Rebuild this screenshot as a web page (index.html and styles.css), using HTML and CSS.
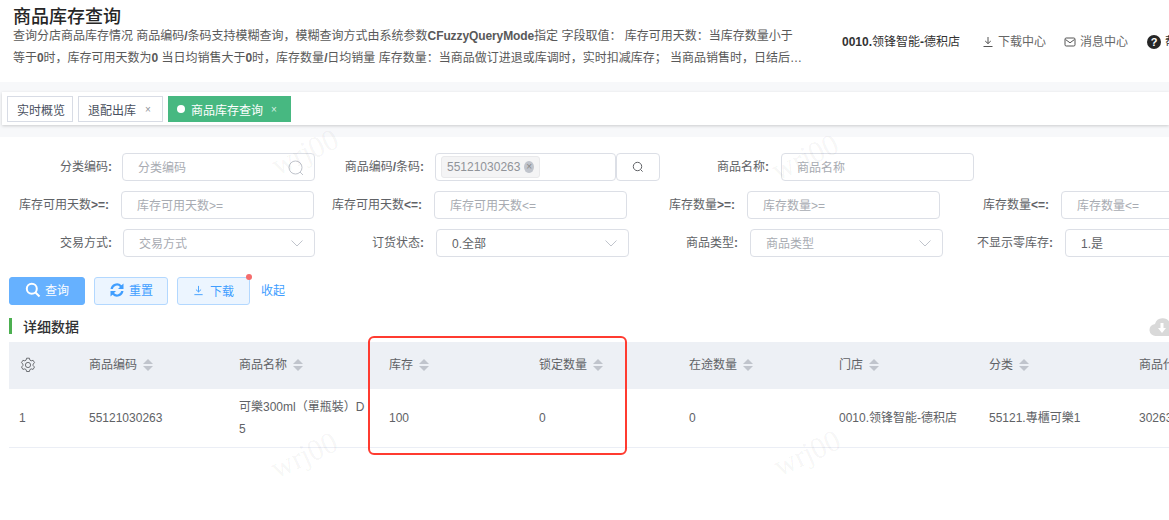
FILE: index.html
```html
<!DOCTYPE html>
<html lang="zh-CN">
<head>
<meta charset="utf-8">
<title>商品库存查询</title>
<link rel="stylesheet" href="styles.css">
</head>
<body>
<div class="page">
  <header class="top">
    <div class="intro">
      <h1 class="title">商品库存查询</h1>
      <p class="desc">查询分店商品库存情况 商品编码<b>/</b>条码支持模糊查询，模糊查询方式由系统参数<b>CFuzzyQueryMode</b>指定 字段取值： 库存可用天数：当库存数量小于等于<b>0</b>时，库存可用天数为<b>0</b> 当日均销售大于<b>0</b>时，库存数量<b>/</b>日均销量 库存数量：当商品做订进退或库调时，实时扣减库存； 当商品销售时，日结后扣减库存，库存数量以日结后的数据为准，请注意查询时间</p>
    </div>
    <div class="store"><b>0010.</b>领锋智能<b>-</b>德积店</div>
    <div class="link link-down">
      <svg class="link-icon" viewBox="0 0 12 12"><path d="M6 1v6.500M3.200 5 6 7.600 8.800 5M1.500 10.500h9" fill="none" stroke="#555" stroke-width="1"/></svg>
      <span>下载中心</span>
    </div>
    <div class="link link-msg">
      <svg class="link-icon" viewBox="0 0 12 12"><rect x="1" y="2" width="10" height="8" rx="1.200" fill="none" stroke="#555"/><path d="M1.500 3.500 6 6.800l4.500-3.300" fill="none" stroke="#555"/></svg>
      <span>消息中心</span>
    </div>
    <div class="link link-help">
      <span class="help-dot">?</span>
      <span>帮助</span>
    </div>
  </header>

  <nav class="tabs">
    <span class="tab tab-first">实时概览</span>
    <span class="tab tab-second">退配出库<i class="tab-x">×</i></span>
    <span class="tab tab-active"><i class="tab-dot"></i>商品库存查询<i class="tab-x">×</i></span>
  </nav>

  <main class="content">
  <section class="form">
    <div class="row row-1">
      <label class="lab">分类编码<b>:</b></label>
      <div class="ctl ph">分类编码
        <svg class="ctl-search" viewBox="0 0 16 16"><circle cx="7.500" cy="7.500" r="6.500" fill="none" stroke="#c0c4cc"/><path d="m12 12 3 3" stroke="#c0c4cc"/></svg>
      </div>
      <label class="lab">商品编码<b>/</b>条码<b>:</b></label>
      <div class="ctl ctl-tag"><span class="tag">55121030263<i class="tag-x">×</i></span></div>
      <button class="search-btn" type="button"><svg viewBox="0 0 12 12"><circle cx="5.500" cy="5.500" r="4.200" fill="none" stroke="#606266"/><path d="m8.600 8.600 2 2" stroke="#606266"/></svg></button>
      <label class="lab">商品名称<b>:</b></label>
      <div class="ctl ph">商品名称</div>
    </div>
    <div class="row row-2">
      <label class="lab">库存可用天数<b>&gt;=:</b></label>
      <div class="ctl ph">库存可用天数&gt;=</div>
      <label class="lab">库存可用天数<b>&lt;=:</b></label>
      <div class="ctl ph">库存可用天数&lt;=</div>
      <label class="lab">库存数量<b>&gt;=:</b></label>
      <div class="ctl ph">库存数量&gt;=</div>
      <label class="lab">库存数量<b>&lt;=:</b></label>
      <div class="ctl ph">库存数量&lt;=</div>
    </div>
    <div class="row row-3">
      <label class="lab">交易方式<b>:</b></label>
      <div class="ctl ph">交易方式<svg class="chev" viewBox="0 0 12 7"><path d="m.5.5 5.500 5.500L11.500.5" fill="none" stroke="#c0c4cc"/></svg></div>
      <label class="lab">订货状态<b>:</b></label>
      <div class="ctl val">0.全部<svg class="chev" viewBox="0 0 12 7"><path d="m.5.5 5.500 5.500L11.500.5" fill="none" stroke="#c0c4cc"/></svg></div>
      <label class="lab">商品类型<b>:</b></label>
      <div class="ctl ph">商品类型<svg class="chev" viewBox="0 0 12 7"><path d="m.5.5 5.500 5.500L11.500.5" fill="none" stroke="#c0c4cc"/></svg></div>
      <label class="lab">不显示零库存<b>:</b></label>
      <div class="ctl val">1.是</div>
    </div>
  </section>

  <div class="actions">
    <button class="btn btn-query" type="button"><svg viewBox="0 0 16 16"><circle cx="6.800" cy="6.800" r="5" fill="none" stroke="#fff" stroke-width="2"/><path d="m10.500 10.500 4 4" stroke="#fff" stroke-width="2"/></svg>查询</button>
    <button class="btn btn-reset" type="button"><svg viewBox="0 0 16 16"><path d="M1.500 7a6.500 6.500 0 0 1 11-3.800L14.500 1.500V7H9l2-2A4.200 4.200 0 0 0 3.800 7zM14.500 9a6.500 6.500 0 0 1-11 3.800L1.500 14.500V9H7l-2 2A4.200 4.200 0 0 0 12.200 9z" fill="#409eff"/></svg>重置</button>
    <button class="btn btn-down" type="button"><svg viewBox="0 0 12 12"><path d="M6 1v6.500M3.200 5 6 7.600 8.800 5M1.500 10.500h9" fill="none" stroke="#409eff"/></svg>下载<i class="red-dot"></i></button>
    <a class="collapse">收起</a>
  </div>

  <div class="section">
    <h2 class="section-title">详细数据</h2>
    <svg class="cloud" viewBox="0 0 26 20"><path d="M7 19a6 6 0 0 1-1-12A8 8 0 0 1 21 6a6.500 6.500 0 0 1-.5 13z" fill="#d9d9d9"/><path d="M11.500 6h3v5h2.500l-4 5-4-5h2.500z" fill="#fff"/></svg>
  </div>

  <table class="grid">
    <colgroup>
      <col class="c-first"><col class="c"><col class="c"><col class="c"><col class="c"><col class="c"><col class="c"><col class="c"><col class="c">
    </colgroup>
    <thead>
      <tr>
        <th><svg class="gear" viewBox="0 0 16 16"><path d="M6.600 1.200h2.800l.5 1.900 1.300.7 1.900-.5 1.400 2.400-1.400 1.400v1.500l1.400 1.400-1.400 2.400-1.900-.5-1.300.7-.5 1.900H6.600l-.5-1.900-1.300-.7-1.900.5-1.400-2.400 1.400-1.400V7.100L1.500 5.700l1.400-2.400 1.900.5 1.300-.7z" fill="none" stroke="#606266" stroke-linejoin="round" stroke-width=".9"/><circle cx="8" cy="8" r="2.600" fill="none" stroke="#606266" stroke-width=".9"/></svg></th>
        <th><span class="th-text">商品编码<i class="sort"></i></span></th>
        <th><span class="th-text">商品名称<i class="sort"></i></span></th>
        <th><span class="th-text">库存<i class="sort"></i></span></th>
        <th><span class="th-text">锁定数量<i class="sort"></i></span></th>
        <th><span class="th-text">在途数量<i class="sort"></i></span></th>
        <th><span class="th-text">门店<i class="sort"></i></span></th>
        <th><span class="th-text">分类<i class="sort"></i></span></th>
        <th><span class="th-text">商品代码<i class="sort"></i></span></th>
      </tr>
    </thead>
    <tbody>
      <tr>
        <td>1</td>
        <td>55121030263</td>
        <td><div class="name">可樂300ml（單瓶裝）D5</div></td>
        <td>100</td>
        <td>0</td>
        <td>0</td>
        <td>0010.领锋智能-德积店</td>
        <td>55121.專櫃可樂1</td>
        <td>30263</td>
      </tr>
    </tbody>
  </table>
  </main>

  <div class="highlight"></div>
  <span class="wm wm-1">wrj00</span>
  <span class="wm wm-2">wrj00</span>
  <span class="wm wm-3">wrj00</span>
  <span class="wm wm-4">wrj00</span>
</div>
</body>
</html>
```

FILE: styles.css
```css
* { box-sizing: border-box; }
html, body { margin: 0; padding: 0; background: #fff; }
body {
  width: 1169px;
  height: 520px;
  overflow: hidden;
  font-family: "Liberation Sans", "Noto Sans CJK SC", sans-serif;
  font-size: 12px;
  color: #606266;
}
.page { position: relative; width: 1169px; height: 520px; overflow: hidden; background: #f7f8fa; }
i { font-style: normal; }

.top {
  height: 82px;
  display: flex;
  align-items: flex-start;
  padding: 10px 0 0 13px;
  background: #fff;
  white-space: nowrap;
}
.intro { width: 792px; white-space: normal; flex: none; }
.title { margin: 0; font-size: 18px; line-height: 15px; font-weight: 500; color: #262626; }
.desc {
  margin: 0;
  width: 791px;
  line-height: 22px;
  color: #595959;
  display: -webkit-box;
  -webkit-box-orient: vertical;
  -webkit-line-clamp: 2;
  overflow: hidden;
}
.desc b { letter-spacing: -.1px; }
.store { margin: 23px 0 0 37px; line-height: 18px; color: #333; width: 118px; flex: none; }
.link { display: flex; align-items: center; flex: none; margin-top: 23px; line-height: 18px; color: #666; }
.link-icon { width: 12px; height: 12px; margin-right: 4px; }
.link-down { margin-left: 22px; }
.link-msg { margin-left: 18px; }
.link-help { margin-left: 19px; color: #333; }
.help-dot {
  width: 14px; height: 14px; margin-right: 4px; border-radius: 50%;
  background: #262626; color: #fff; font-size: 11px; font-weight: 700;
  line-height: 14px; text-align: center;
}

.tabs {
  margin: 10px 0 0 2px;
  height: 33px;
  display: flex;
  align-items: center;
  gap: 5px;
  padding: 0 0 0 5px;
  background: #fff;
  box-shadow: 0 1px 3px rgba(0, 0, 0, .18);
  position: relative;
}
.tab {
  height: 26px;
  display: flex;
  align-items: center;
  flex: none;
  border: 1px solid #d8dce5;
  color: #495060;
  padding: 1px 9px 0;
  white-space: nowrap;
}
.tab-first { width: 66px; }
.tab-second { width: 85px; }
.tab-active { width: 123px; background: #47b881; border-color: #47b881; color: #fff; padding-left: 8px; }
.tab-dot { width: 8px; height: 8px; border-radius: 50%; background: #fff; margin-right: 6px; flex: none; }
.tab-x { margin-left: 9px; font-size: 10px; color: #909399; }
.tab-active .tab-x { margin-left: 8px; color: #d8f0e4; }

.content { margin-top: 12px; height: 383px; background: #fff; }
.form { padding-top: 16px; display: flex; flex-direction: column; gap: 10px; }
.row { display: grid; grid-template-rows: 28px; height: 28px; width: 1400px; }
.row-1 { grid-template-columns: 112px 203px 109px 192px 44px 109px 205px; }
.row-2 { grid-template-columns: 109px 205px 108px 205px 108px 205px 109px 205px; }
.row-3 { grid-template-columns: 112px 203px 109px 205px 109px 205px 110px 205px; }
.lab { display: block; line-height: 28px; text-align: right; color: #606266; white-space: nowrap; }
.ctl {
  position: relative;
  height: 28px;
  margin-left: 12px;
  border: 1px solid #dcdfe6;
  border-radius: 4px;
  padding: 1px 15px 0;
  line-height: 26px;
  background: transparent;
}
.row-1 .ctl:first-of-type { margin-left: 10px; }
.row-3 .ctl:first-of-type { margin-left: 11px; }
.ph { color: #a8abb2; }
.val { color: #606266; }
.row-1 .ctl-tag { margin-left: 11px; padding: 0 5px; display: flex; align-items: center; }
.tag {
  display: inline-flex; align-items: center;
  height: 22px; width: 99px; padding: 0 5px;
  background: #f4f4f5; border: 1px solid #e9e9eb; border-radius: 3px;
  color: #909399;
}
.tag-x {
  width: 12px; height: 12px; margin-left: 4px; border-radius: 50%;
  background: #c0c4cc; color: #888; font-size: 10px; line-height: 11px; text-align: center;
}
.ctl-search { position: absolute; right: 10px; top: 6px; width: 16px; height: 16px; }
.chev { position: absolute; right: 11px; top: 10px; width: 12px; height: 7px; }
.search-btn {
  margin: 0; padding: 0; width: 44px; height: 28px;
  display: flex; align-items: center; justify-content: center;
  background: #fff; border: 1px solid #dcdfe6; border-radius: 4px;
}
.search-btn svg { width: 12px; height: 12px; }

.actions { display: flex; align-items: center; height: 29px; margin-top: 19px; padding-left: 9px; }
.btn {
  display: flex; align-items: center; justify-content: center;
  height: 28px; margin: 0; padding: 0 0 2px; border-radius: 3px;
  font: inherit; position: relative;
}
.btn svg { margin-right: 4px; }
.btn-query { width: 76px; background: #66b1ff; border: 1px solid #66b1ff; color: #fff; }
.btn-query svg { width: 16px; height: 16px; }
.btn-reset { width: 74px; margin-left: 9px; background: #ecf5ff; border: 1px solid #b3d8ff; color: #409eff; }
.btn-reset svg { width: 16px; height: 16px; }
.btn-down { width: 73px; margin-left: 9px; margin-top: 1px; background: #ecf5ff; border: 1px solid #b3d8ff; color: #409eff; }
.btn-down svg { width: 11px; height: 11px; margin-right: 6px; }
.red-dot { position: absolute; top: -4px; right: -3px; width: 6px; height: 6px; border-radius: 50%; background: #f56c6c; }
.collapse { margin: 0 0 2px 11px; color: #409eff; }

.section { position: relative; height: 16px; margin-top: 13px; margin-left: 9px; border-left: 3px solid #4caf50; }
.section-title { margin: 0 0 0 11px; font-size: 14px; line-height: 18px; font-weight: 500; color: #303133; }
.cloud { position: absolute; left: 1137px; top: -1px; width: 26px; height: 20px; }

.grid { margin: 8px 0 0 9px; width: 1270px; table-layout: fixed; border-collapse: collapse; }
.c-first { width: 70px; }
.c { width: 150px; }
.grid th {
  height: 47px; padding: 0 10px; background: #edf0f5;
  text-align: left; font-weight: 400; color: #606266; white-space: nowrap;
}
.th-text { display: block; line-height: 14px; padding-bottom: 2px; }
.grid td {
  height: 58px; padding: 0 10px; border-bottom: 1px solid #ebeef5;
  color: #606266; line-height: 22px; white-space: nowrap;
}
.name { width: 130px; white-space: normal; word-break: break-all; }
.gear { width: 16px; height: 16px; display: block; margin: 0 0 2px 1px; }
.sort { display: inline-block; position: relative; width: 11px; height: 12px; margin-left: 6px; vertical-align: -2px; }
.sort::before, .sort::after {
  content: ""; position: absolute; left: 0;
  border-left: 5.500px solid transparent; border-right: 5.500px solid transparent;
}
.sort::before { top: 0; border-bottom: 5px solid #c0c4cc; }
.sort::after { bottom: 0; border-top: 5px solid #c0c4cc; }

.highlight {
  position: absolute; left: 368px; top: 336px; width: 259px; height: 119px;
  border: 2px solid #ff3b30; border-radius: 6px;
}
.wm {
  position: absolute; font-family: "Liberation Serif", serif; font-size: 30px;
  color: rgba(0, 0, 0, .05); transform: rotate(-25deg); pointer-events: none;
}
.wm-1 { left: 270px; top: 135px; }
.wm-2 { left: 770px; top: 140px; }
.wm-3 { left: 269px; top: 438px; }
.wm-4 { left: 772px; top: 436px; }
```
